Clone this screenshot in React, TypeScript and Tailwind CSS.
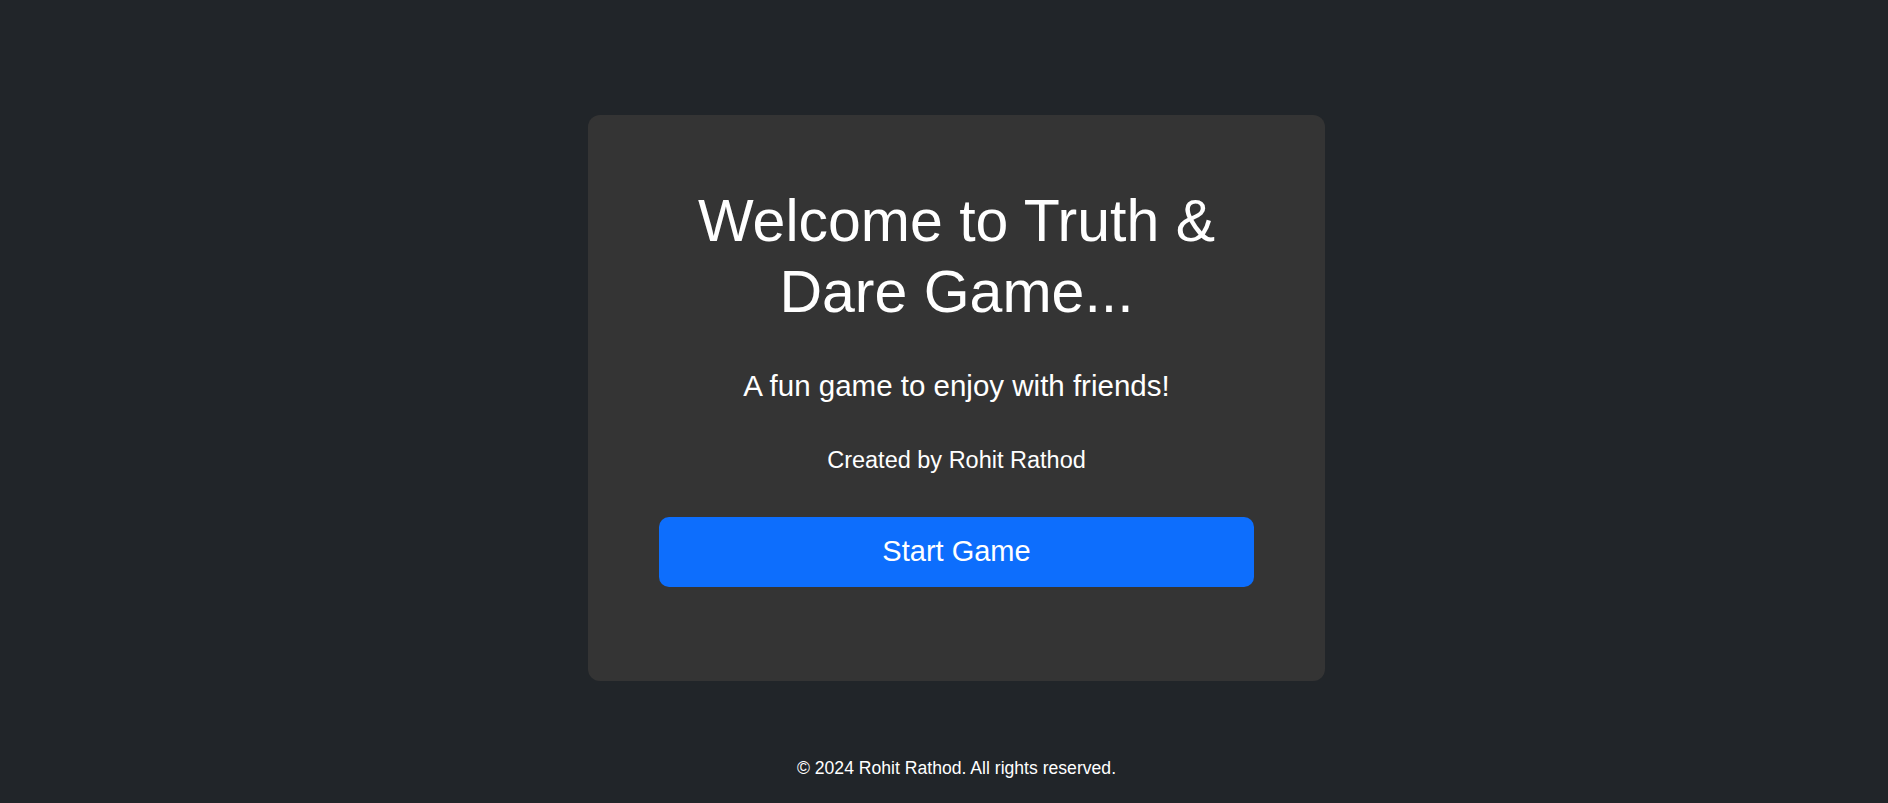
const App = () => {
  return (
    <div className="min-h-screen w-full bg-[#212529] text-white flex flex-col items-center pt-[115px] pl-[25px]" style={{ fontFamily: '"Liberation Sans", Arial, sans-serif' }}>
      <div className="w-[737px] h-[566px] bg-[#343434] rounded-xl px-[71px] pt-[71px] flex flex-col items-center text-center">
        <h1 className="text-[59px] leading-[1.2]">Welcome to Truth &amp; Dare Game...</h1>
        <p className="text-[29.5px] leading-[1.2] mt-[40px]">A fun game to enjoy with friends!</p>
        <p className="text-[23.5px] leading-[1.2] mt-[43px]">Created by Rohit Rathod</p>
        <button className="w-full h-[70px] mt-[43px] bg-[#0d6efd] rounded-[10px] text-[29px] text-white">Start Game</button>
      </div>
      <p className="text-[17.6px] leading-[1.2] mt-[77px]">© 2024 Rohit Rathod. All rights reserved.</p>
    </div>
  );
};

export default App;
